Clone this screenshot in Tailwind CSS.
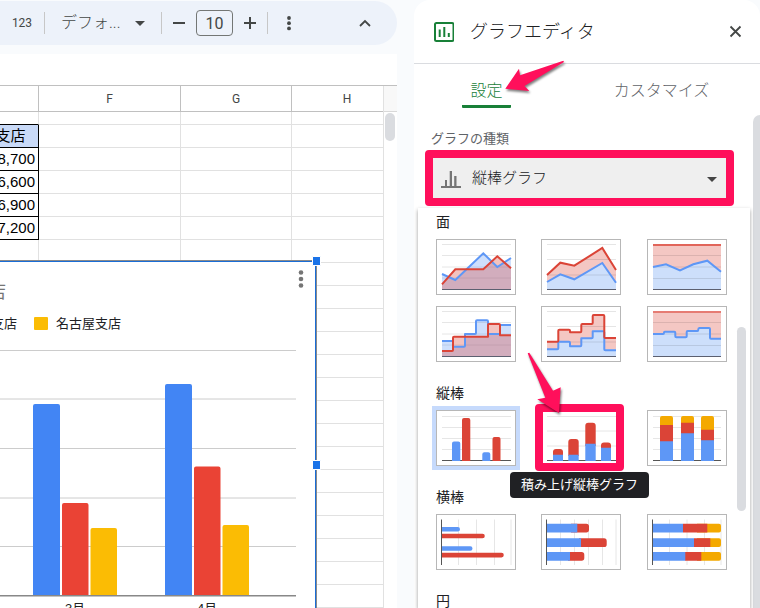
<!DOCTYPE html>
<html lang="ja">
<head>
<meta charset="utf-8">
<meta name="viewport" content="width=device-width, initial-scale=1">
<title>グラフエディタ</title>
<script src="https://cdn.jsdelivr.net/npm/@tailwindcss/browser@4"></script>
</head>
<body class="flex h-screen gap-[17px] overflow-hidden bg-[#f9fbfd] font-['Liberation_Sans','Noto_Sans_CJK_JP',sans-serif] text-[#202124]">

<!-- Spreadsheet -->
<main class="flex min-w-0 flex-1 flex-col">
  <div role="toolbar" aria-label="ツールバー" class="mt-px flex h-11 shrink-0 items-center rounded-r-full bg-[#edf2fa] font-[Roboto,'Noto_Sans_CJK_JP',sans-serif] text-[#444746]">
    <button class="w-11 text-xs">123</button>
    <span class="h-[22px] w-px bg-[#c7c7c7]"></span>
    <button class="flex w-[116px] items-center justify-between pr-4 pl-4 text-base font-light">デフォ...
      <svg class="h-[5px] w-[10px]" viewBox="0 0 10 5" fill="#444746"><path d="M0 0h10L5 5z"/></svg>
    </button>
    <span class="h-[22px] w-px bg-[#c7c7c7]"></span>
    <button aria-label="縮小" class="flex w-[34px] justify-center"><svg class="size-3" viewBox="0 0 12 12"><path d="M0 6h12" stroke="#444746" stroke-width="2"/></svg></button>
    <input aria-label="フォントサイズ" value="10" class="h-[26px] w-[37px] rounded-[4px] border border-[#747775] text-center text-base">
    <button aria-label="拡大" class="flex w-[34px] justify-center"><svg class="size-3" viewBox="0 0 12 12"><path d="M0 6h12M6 0v12" stroke="#444746" stroke-width="2"/></svg></button>
    <span class="h-[22px] w-px bg-[#c7c7c7]"></span>
    <button aria-label="その他" class="flex w-[42px] justify-center"><svg class="h-4 w-4" viewBox="0 0 16 16" fill="#444746"><circle cx="8" cy="3" r="1.9"/><circle cx="8" cy="8.2" r="1.9"/><circle cx="8" cy="13.4" r="1.9"/></svg></button>
    <button aria-label="メニューを非表示" class="mr-3 ml-auto flex w-10 justify-center"><svg class="h-3 w-3" viewBox="0 0 12 12" fill="none" stroke="#444746" stroke-width="1.8"><path d="M1 9l5-5 5 5"/></svg></button>
  </div>

  <div class="mt-[9px] h-[31px] shrink-0 bg-white"></div>

  <div class="flex min-h-0 flex-1 border-t border-[#c0c0c0] bg-white">
    <div class="relative min-w-0 flex-1 overflow-hidden">
      <table class="-ml-[62px] w-[465px] table-fixed border-separate border-spacing-0 text-[15px] leading-5 text-black [&_td]:h-[23px] [&_td]:border-r [&_td]:border-b [&_td]:border-[#e1e1e1] [&_td]:p-0 [&_th]:h-[26px] [&_th]:border-r [&_th]:border-b [&_th]:border-[#c0c0c0] [&_th]:p-0">
        <colgroup><col class="w-[101px]"><col class="w-[142px]"><col class="w-[111px]"><col class="w-[111px]"></colgroup>
        <thead class="font-[Roboto,sans-serif] text-xs text-[#444746]"><tr><th></th><th class="font-normal">F</th><th class="font-normal">G</th><th class="font-normal">H</th></tr></thead>
        <tbody>
          <tr><td class="!h-[13px] !border-b-black"></td><td class="!h-[13px]"></td><td class="!h-[13px]"></td><td class="!h-[13px]"></td></tr>
          <tr><td class="!border-black bg-[#c9daf8] text-center">名古屋支店</td><td></td><td></td><td></td></tr>
          <tr><td class="!border-black !pr-[3px] text-right">8,700</td><td></td><td></td><td></td></tr>
          <tr><td class="!border-black !pr-[3px] text-right">6,600</td><td></td><td></td><td></td></tr>
          <tr><td class="!border-black !pr-[3px] text-right">6,900</td><td></td><td></td><td></td></tr>
          <tr><td class="!border-black !pr-[3px] text-right">7,200</td><td></td><td></td><td></td></tr>
          <tr><td></td><td></td><td></td><td></td></tr>
          <tr><td></td><td></td><td></td><td></td></tr>
          <tr><td></td><td></td><td></td><td></td></tr>
          <tr><td></td><td></td><td></td><td></td></tr>
          <tr><td></td><td></td><td></td><td></td></tr>
          <tr><td></td><td></td><td></td><td></td></tr>
          <tr><td></td><td></td><td></td><td></td></tr>
          <tr><td></td><td></td><td></td><td></td></tr>
          <tr><td></td><td></td><td></td><td></td></tr>
          <tr><td></td><td></td><td></td><td></td></tr>
          <tr><td></td><td></td><td></td><td></td></tr>
          <tr><td></td><td></td><td></td><td></td></tr>
          <tr><td></td><td></td><td></td><td></td></tr>
          <tr><td></td><td></td><td></td><td></td></tr>
          <tr><td></td><td></td><td></td><td></td></tr>
          <tr><td></td><td></td><td></td><td></td></tr>
        </tbody>
      </table>

      <svg class="absolute top-[168px] left-0 h-[354px] w-[322px]" viewBox="0 254 322 354" role="img" aria-label="支店別の縦棒グラフ" font-family="'Liberation Sans','Noto Sans CJK JP',sans-serif">
        <path fill="#fff" d="M0 260h317v348H0z"/>
        <path fill="#8a8a8a" d="M0 260h317v348h-1V261H0z"/>
        <path fill="#1a6dd6" d="M0 261h316v347h-1V262H0z"/>
        <g fill="#1a73e8" stroke="#fff"><path d="M312.500 256.500h8v9h-8z"/><path d="M312.500 460.500h8v9h-8z"/></g>
        <g fill="#757575"><circle cx="301" cy="272.500" r="2.300"/><circle cx="301" cy="279" r="2.300"/><circle cx="301" cy="285.500" r="2.300"/></g>
        <text x="6" y="298" font-size="18" fill="#757575">
          <tspan text-anchor="end">店</tspan></text>
        <g font-size="13" fill="#202124"><text x="17" y="328" text-anchor="end">大阪支店</text><text x="56" y="328">名古屋支店</text></g>
        <rect x="34" y="317" width="14" height="13" rx="1" fill="#fbbc04"/>
        <path stroke="#ccc" d="M0 350.500h296M0 399h296M0 448.500h296M0 498h296M0 546.500h296"/>
        <g fill="#4285f4"><path d="M33 596V406q0-2 2-2h23q2 0 2 2v190zM165 596V386q0-2 2-2h23q2 0 2 2v210z"/></g>
        <g fill="#ea4335"><path d="M62 596V505q0-2 2-2h22.500q2 0 2 2v91zM194 596V468.500q0-2 2-2h22.500q2 0 2 2v127.500z"/></g>
        <g fill="#fbbc04"><path d="M90.500 596v-66q0-2 2-2H115q2 0 2 2v66zM222.500 596v-69q0-2 2-2H247q2 0 2 2v69z"/></g>
        <path fill="#888" d="M0 595h296v1.500H0z"/>
        <g font-size="13" fill="#222" text-anchor="middle"><text x="75" y="613">3月</text><text x="207" y="613">4月</text></g>
      </svg>
    </div>
    <div class="w-[14px] shrink-0 border-l border-[#e1e1e1]">
      <div class="h-[26px] border-b border-[#d9d9d9] bg-[#f8f8f8]"></div>
      <div class="mt-px ml-px h-7 w-[10px] rounded-full bg-[#dadce0]"></div>
    </div>
  </div>
</main>

<!-- Chart editor -->
<aside class="relative flex w-[346px] shrink-0 flex-col overflow-hidden rounded-t-2xl bg-white">
  <header class="flex h-16 shrink-0 items-center border-b border-[#dadce0] pr-[18px] pl-5">
    <svg class="size-5" viewBox="0 0 20 20" fill="none" stroke="#188038" stroke-width="2"><rect x="1" y="1" width="18.500" height="18" rx="1.500"/><path d="M5.700 15V7.500M10.300 15V5M14.800 15v-4"/></svg>
    <h1 class="ml-4 text-lg font-light">グラフエディタ</h1>
    <button aria-label="閉じる" class="ml-auto"><svg class="size-[13px]" viewBox="0 0 13 13" stroke="#444746" stroke-width="1.800"><path d="M1.500 1.500l10 10M11.500 1.500l-10 10"/></svg></button>
  </header>

  <div role="tablist" class="flex h-[44px] shrink-0 text-base">
    <button role="tab" aria-selected="true" class="flex w-[145px] justify-center font-light text-[#188038]"><span class="flex h-full w-[49px] items-center justify-center rounded-b-[1px] border-b-[3px] border-[#188038] pt-3 whitespace-nowrap">設定</span></button>
    <button role="tab" aria-selected="false" class="flex flex-1 items-center justify-center pt-[9px] pl-1 font-light text-[#5f6368]">カスタマイズ</button>
  </div>

  <div class="px-[11px] pt-[21px]">
    <label for="kind" class="ml-[6px] block text-[13px] leading-5 text-[#5f6368]">グラフの種類</label>
    <div class="relative mt-px h-14 w-[309px] rounded-[4px] border-8 border-[#ff0f5b]">
      <select id="kind" class="h-full w-full appearance-none bg-[#efefef] pt-px pl-[39px] text-[15px] font-light text-[#202124]"><option>縦棒グラフ</option></select>
      <svg class="pointer-events-none absolute top-[13px] left-2 h-[17px] w-5" viewBox="0 0 20 17" fill="#757575"><path d="M0 15h20v2H0zM4 9h2v6H4zM8.700 0h2.300v15h-2.300zM13.200 5h2.300v10h-2.300z"/></svg>
      <svg class="pointer-events-none absolute top-[19px] right-[9px] h-[5px] w-[10px]" viewBox="0 0 10 5" fill="#444"><path d="M0 0h10L5 5z"/></svg>
    </div>
  </div>

  <div class="absolute top-[115px] right-0 bottom-0 w-[7px] rounded-tl-full bg-[#dadce0]"></div>

  <!-- Open chart type menu -->
  <div class="absolute top-52 right-[10px] bottom-0 left-1 bg-white shadow-[0_2px_4px_rgba(0,0,0,0.4)]">
    <div class="flex w-[309px] flex-col gap-[21px] pt-1 pl-[18px] text-sm leading-5 [&_button]:relative [&_button]:h-14 [&_button]:w-20 [&_button]:border [&_button]:border-[#b7b7b7] [&_button]:bg-white [&_button>svg]:h-full [&_button>svg]:w-full [&_h2]:mb-[7px]">
      <section>
        <h2>面</h2>
        <div class="grid grid-cols-[105px_106px_80px] gap-y-[11px]">
          <button aria-label="面グラフ"><svg viewBox="1 1 78 54" fill="none">
            <path stroke="#e6e6e6" d="M6 5.500h69M6 16.500h69M6 28h69M6 39h69"/>
            <path fill="#4285f4" fill-opacity=".26" d="M6 35l13.300 6 28-26.700 14 13.700L75 19v32H6z"/>
            <path fill="#db4437" fill-opacity=".32" d="M6 45.300l13.300-15h28l14-13L75 29.300V51H6z"/>
            <path stroke="#5e97f6" stroke-width="2" d="M6 35l13.300 6 28-26.700 14 13.700L75 19"/>
            <path stroke="#db4437" stroke-width="2" d="M6 45.300l13.300-15h28l14-13L75 29.300"/>
            <path stroke="#5c6070" d="M6 50.500h69"/></svg></button>
          <button aria-label="積み上げ面グラフ"><svg viewBox="1 1 78 54" fill="none">
            <path fill="#f4c7c3" d="M6 36l13.300-12.300 14 3L61.300 9 75 31v20H6z"/>
            <path fill="#cddffb" d="M6 43l13.300-7.700 14 5L61.300 24 75 43.700V51H6z"/>
            <path stroke="#000" stroke-opacity=".1" d="M6 5.500h69M6 20.500h69M6 36h69"/>
            <path stroke="#5e97f6" stroke-width="2" d="M6 43l13.300-7.700 14 5L61.300 24 75 43.700"/>
            <path stroke="#db4437" stroke-width="2" d="M6 36l13.300-12.300 14 3L61.300 9 75 31"/>
            <path stroke="#5c6070" d="M6 50.500h69"/></svg></button>
          <button aria-label="100% 積み上げ面グラフ"><svg viewBox="1 1 78 54" fill="none">
            <path fill="#f4c7c3" d="M6 5h68v46H6z"/>
            <path fill="#cddffb" d="M6 28l13-2.700 14 6 13.300-6 14-3.600 13.700 11V51H6z"/>
            <path stroke="#000" stroke-opacity=".1" d="M6 16.500h68M6 28h68M6 39.500h68"/>
            <path stroke="#5e97f6" stroke-width="2" d="M6 28l13-2.700 14 6 13.300-6 14-3.600 13.700 11"/>
            <path stroke="#db4437" stroke-width="1.500" d="M6 6h68"/>
            <path stroke="#5c6070" d="M6 50.500h68"/></svg></button>
          <button aria-label="階段状面グラフ"><svg viewBox="1 1 78 54" fill="none" stroke-linejoin="round">
            <path stroke="#e6e6e6" d="M6 5.500h69M6 16.500h69M6 28h69M6 39h69"/>
            <path fill="#4285f4" fill-opacity=".26" d="M6 35H17V40.700H29V28H40V14.300H52V28H64V19H75V51H6z"/>
            <path fill="#db4437" fill-opacity=".32" d="M6 45H17V30.700H52V18H64V29.300H75V51H6z"/>
            <path stroke="#5e97f6" stroke-width="2" d="M6 35H16q1 0 1 1v4.700H28q1 0 1-1V28H39q1 0 1-1V15.300q0-1 1-1H51q1 0 1 1V28H64V20q0-1 1-1H75"/>
            <path stroke="#db4437" stroke-width="2" d="M6 45H16q1 0 1-1V31.700q0-1 1-1H52V19q0-1 1-1H63q1 0 1 1V29.300H75"/>
            <path stroke="#5c6070" d="M6 50.500h69"/></svg></button>
          <button aria-label="積み上げ階段状面グラフ"><svg viewBox="1 1 78 54" fill="none" stroke-linejoin="round">
            <path fill="#f4c7c3" d="M6 35.700H17.300V23.700H29V26.300H40.300V18H51.700V9H63.300V32H75V51H6z"/>
            <path fill="#cddffb" d="M6 43.300H17.300V35.700H29V40.300H40.300V32.300H51.700V24.300H63.300V43.300H75V51H6z"/>
            <path stroke="#000" stroke-opacity=".1" d="M6 5.500h69M6 20.500h69M6 36h69"/>
            <path stroke="#5e97f6" stroke-width="2" d="M6 43.300H16.300q1 0 1-1V35.700H28q1 0 1 1v3.600H39.300q1 0 1-1v-7H50.700q1 0 1-1v-6H62.300q1 0 1 1v17q0 1 1 1H75"/>
            <path stroke="#db4437" stroke-width="2" d="M6 35.700H16.300q1 0 1-1V24.700q0-1 1-1H28q1 0 1 1v1.600H39.300q1 0 1-1V19q0-1 1-1h9.400q1 0 1-1V10q0-1 1-1h9.600q1 0 1 1V31q0 1 1 1H75"/>
            <path stroke="#5c6070" d="M6 50.500h69"/></svg></button>
          <button aria-label="100% 積み上げ階段状面グラフ"><svg viewBox="1 1 78 54" fill="none" stroke-linejoin="round">
            <path fill="#f4c7c3" d="M6 5h68v46H6z"/>
            <path fill="#cddffb" d="M6 28H16.700V25.700H28.300V31.300H39.700V25H51.300V22H63V32.700H74V51H6z"/>
            <path stroke="#000" stroke-opacity=".1" d="M6 16.500h68M6 28h68M6 39.500h68"/>
            <path stroke="#5e97f6" stroke-width="2" d="M6 28H16q1 0 1-1.200t1-1.100h9.300q1 0 1 1v3.600q0 1 1 1h9.400q1 0 1-1V26q0-1 1-1H50.300q1 0 1-1.500t1-1.500H62q1 0 1 1v8.700q0 1 1 1H74"/>
            <path stroke="#e67c73" stroke-width="2" d="M6 6h68"/>
            <path stroke="#5c6070" d="M6 50.500h68"/></svg></button>
        </div>
      </section>
      <section>
        <h2>縦棒</h2>
        <div class="grid grid-cols-[105px_106px_80px]">
          <button aria-label="縦棒グラフ" class="ring-4 ring-[#c6dafc]"><svg viewBox="1 1 78 54" fill="none">
            <path stroke="#e6e6e6" d="M6 6.500h69M6 17.500h69M6 28.500h69M6 39.500h69"/>
            <path stroke="#555" d="M6 50.500h69"/>
            <path fill="#5e97f6" d="M16 51V33.500q0-2 2-2h4.300q2 0 2 2V51zM46.300 51v-6.700q0-2 2-2h4q2 0 2 2V51z"/>
            <path fill="#db4437" d="M26 51V10q0-2 2-2h4.300q2 0 2 2v41zM56.500 51V29q0-2 2-2h4q2 0 2 2v22z"/></svg></button>
          <button aria-label="積み上げ縦棒グラフ" aria-describedby="tip"><svg viewBox="1 1 78 54" fill="none">
            <path stroke="#e6e6e6" d="M6 6.500h69M6 21h69M6 36h69"/>
            <path stroke="#555" d="M6 50.500h69"/>
            <path fill="#db4437" d="M12 46v-4q0-3 3-3h4q3 0 3 3v4zM27.300 46V32q0-3 3-3h4.400q3 0 3 3v14zM44.300 36V15.700q0-3 3-3h4.400q3 0 3 3V36zM60 39v-3.500q0-3 3-3h4q3 0 3 3V39z"/>
            <path fill="#5e97f6" d="M12 44.700h10V51H12zM27.300 44.700h10.400V51H27.300zM44.300 33.700h10.400V51H44.300zM60 37.700h10V51H60z"/></svg>
            <span class="absolute -top-[7px] -right-1 -bottom-[6px] -left-[7px] rounded-[4px] border-8 border-[#ff0f5b]"></span></button>
          <button aria-label="100% 積み上げ縦棒グラフ"><svg viewBox="1 1 78 54" fill="none">
            <path stroke="#e6e6e6" d="M6 6.500h68M6 17.500h68M6 28.500h68M6 39.500h68"/>
            <path stroke="#555" d="M6 50.500h68"/>
            <path fill="#f4a900" d="M13 20V8q0-2 2-2h9q2 0 2 2v12zM34 20V8q0-2 2-2h9q2 0 2 2v12zM54 20V8q0-2 2-2h9q2 0 2 2v12z"/>
            <path fill="#db4437" d="M13 15h13v20H13zM34 12.700h13V30H34zM54 19.700h13V35H54z"/>
            <path fill="#5e97f6" d="M13 31.300h13V51H13zM34 23.300h13V51H34zM54 30.300h13V51H54z"/></svg></button>
        </div>
      </section>
      <section>
        <h2>横棒</h2>
        <div class="grid grid-cols-[105px_106px_80px]">
          <button aria-label="横棒グラフ"><svg viewBox="1 1 78 54" fill="none">
            <path stroke="#e6e6e6" d="M22.500 5.500V51M40.500 5.500V51M58.500 5.500V51M75 5.500V51"/>
            <path stroke="#555" d="M5.500 5.500V51"/>
            <path fill="#5e97f6" d="M6 13h15.800a2.200 2.200 0 0 1 0 4.400H6zM6 32.300h28.300a2.200 2.200 0 0 1 0 4.400H6z"/>
            <path fill="#db4437" d="M6 19.700h40.500a2.300 2.300 0 0 1 0 4.600H6zM6 38.800h59.500a2.300 2.300 0 0 1 0 4.600H6z"/></svg></button>
          <button aria-label="積み上げ横棒グラフ"><svg viewBox="1 1 78 54" fill="none">
            <path stroke="#e6e6e6" d="M19.500 5.500V51M33.500 5.500V51M47.500 5.500V51M61.500 5.500V51M75 5.500V51"/>
            <path stroke="#555" d="M5.500 5.500V51"/>
            <path fill="#db4437" d="M30 9.700h15.300q2.700 0 2.700 2.700v3.300q0 2.700-2.700 2.700H30zM38 24.300h25q2.700 0 2.700 2.700v3.400q0 2.700-2.700 2.700H38zM27 38h13.600q2.700 0 2.700 2.700V44q0 2.700-2.700 2.700H27z"/>
            <path fill="#5e97f6" d="M6 9.700h30.300v8.700H6zM6 24.300h34v8.800H6zM6 38h23v8.700H6z"/></svg></button>
          <button aria-label="100% 積み上げ横棒グラフ"><svg viewBox="1 1 78 54" fill="none">
            <path stroke="#e6e6e6" d="M22.500 5.500V51M40 5.500V51M57.500 5.500V51M74 5.500V51"/>
            <path stroke="#555" d="M5.500 5.500V51"/>
            <path fill="#f4a900" d="M50 9.700h22q2 0 2 2v4.700q0 2-2 2H50zM50 24.300h22q2 0 2 2v4.800q0 2-2 2H50zM50 38h22q2 0 2 2v4.700q0 2-2 2H50z"/>
            <path fill="#db4437" d="M36 9.700h24.300v8.700H36zM47 24.300h16.300v8.800H47zM38 38h16.300v8.700H38z"/>
            <path fill="#5e97f6" d="M6 9.700h30v8.700H6zM6 24.300h41v8.800H6zM6 38h32.300v8.700H6z"/></svg></button>
        </div>
      </section>
      <section><h2>円</h2></section>
    </div>
    <div class="absolute top-[119px] right-1 h-[184px] w-[9px] rounded-full bg-[#dadce0]"></div>
    <div id="tip" role="tooltip" class="absolute top-[264px] left-[92px] rounded-[4px] bg-[#202124] px-[11px] py-[3px] text-[13px] leading-5 whitespace-nowrap text-white">積み上げ縦棒グラフ</div>
  </div>

  <!-- Pointer arrows -->
  <svg class="pointer-events-none absolute top-0 left-0 h-[608px] w-[346px] drop-shadow-[1px_2px_1px_rgba(0,0,0,0.5)]" viewBox="414 0 346 608" fill="#ff0f5b">
    <path d="M505.300 88.700L519 68.700l1 6.600 43.300-14.600.7 1.300-39.500 24 4.800 5z"/>
    <path d="M527.700 353.300l1.600-.6L553 390.700l7.700-3.400L559 413l-21.700-13.700 8-1.600z"/>
  </svg>
</aside>
</body>
</html>
